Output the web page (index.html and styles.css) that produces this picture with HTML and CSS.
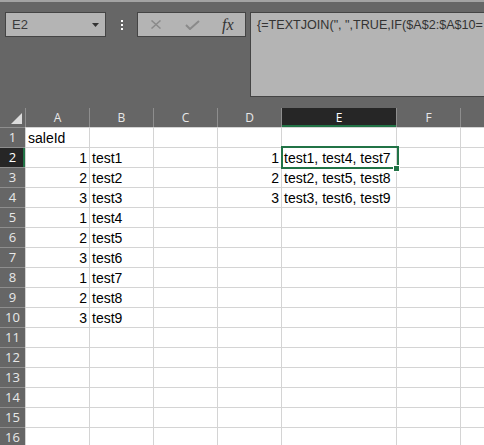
FILE: index.html
```html
<!DOCTYPE html>
<html>
<head>
<meta charset="utf-8">
<link rel="stylesheet" href="styles.css">
</head>
<body>
<div class="strip"></div>
<div class="toolbar">
  <div class="namebox"><span>E2</span><svg width="7" height="4" viewBox="0 0 7 4"><polygon points="0,0 7,0 3.5,4" fill="#333"/></svg></div>
  <div class="grip"><svg width="31" height="25" viewBox="0 0 31 25"><rect x="15" y="8" width="2" height="2" fill="#fff"/><rect x="15" y="12" width="2" height="2" fill="#fff"/><rect x="15" y="16" width="2" height="2" fill="#fff"/></svg></div>
  <div class="fbuttons">
    <svg class="ic-x" width="12" height="9" viewBox="0 0 12 9"><path d="M1.5 0.5 L10.5 8.5 M10.5 0.5 L1.5 8.5" stroke="#8a8a8a" stroke-width="1.5" fill="none"/></svg>
    <svg class="ic-ok" width="15" height="10" viewBox="0 0 15 10"><path d="M1 5 L5 9 L14 1" stroke="#8a8a8a" stroke-width="2" fill="none"/></svg>
    <span class="fx">fx</span>
  </div>
  <div class="formula">{=TEXTJOIN(", ",TRUE,IF($A$2:$A$10=</div>
</div>
<div class="sheet">
  <div class="corner"><svg width="25" height="19" viewBox="0 0 25 19"><polygon points="11,16 22,16 22,5" fill="#dcdcdc"/></svg></div>
  <div class="ch">A</div><div class="ch">B</div><div class="ch">C</div><div class="ch">D</div><div class="ch sel">E</div><div class="ch">F</div><div class="ch"></div>

  <div class="rh">1</div><div class="c">saleId</div><div class="c"></div><div class="c"></div><div class="c"></div><div class="c"></div><div class="c"></div><div class="c"></div>
  <div class="rh sel">2</div><div class="c n">1</div><div class="c">test1</div><div class="c"></div><div class="c n">1</div><div class="c active">test1, test4, test7<span class="handle"></span></div><div class="c"></div><div class="c"></div>
  <div class="rh">3</div><div class="c n">2</div><div class="c">test2</div><div class="c"></div><div class="c n">2</div><div class="c">test2, test5, test8</div><div class="c"></div><div class="c"></div>
  <div class="rh">4</div><div class="c n">3</div><div class="c">test3</div><div class="c"></div><div class="c n">3</div><div class="c">test3, test6, test9</div><div class="c"></div><div class="c"></div>
  <div class="rh">5</div><div class="c n">1</div><div class="c">test4</div><div class="c"></div><div class="c"></div><div class="c"></div><div class="c"></div><div class="c"></div>
  <div class="rh">6</div><div class="c n">2</div><div class="c">test5</div><div class="c"></div><div class="c"></div><div class="c"></div><div class="c"></div><div class="c"></div>
  <div class="rh">7</div><div class="c n">3</div><div class="c">test6</div><div class="c"></div><div class="c"></div><div class="c"></div><div class="c"></div><div class="c"></div>
  <div class="rh">8</div><div class="c n">1</div><div class="c">test7</div><div class="c"></div><div class="c"></div><div class="c"></div><div class="c"></div><div class="c"></div>
  <div class="rh">9</div><div class="c n">2</div><div class="c">test8</div><div class="c"></div><div class="c"></div><div class="c"></div><div class="c"></div><div class="c"></div>
  <div class="rh">10</div><div class="c n">3</div><div class="c">test9</div><div class="c"></div><div class="c"></div><div class="c"></div><div class="c"></div><div class="c"></div>
  <div class="rh">11</div><div class="c"></div><div class="c"></div><div class="c"></div><div class="c"></div><div class="c"></div><div class="c"></div><div class="c"></div>
  <div class="rh">12</div><div class="c"></div><div class="c"></div><div class="c"></div><div class="c"></div><div class="c"></div><div class="c"></div><div class="c"></div>
  <div class="rh">13</div><div class="c"></div><div class="c"></div><div class="c"></div><div class="c"></div><div class="c"></div><div class="c"></div><div class="c"></div>
  <div class="rh">14</div><div class="c"></div><div class="c"></div><div class="c"></div><div class="c"></div><div class="c"></div><div class="c"></div><div class="c"></div>
  <div class="rh">15</div><div class="c"></div><div class="c"></div><div class="c"></div><div class="c"></div><div class="c"></div><div class="c"></div><div class="c"></div>
  <div class="rh">16</div><div class="c"></div><div class="c"></div><div class="c"></div><div class="c"></div><div class="c"></div><div class="c"></div><div class="c"></div>
</div>
</body>
</html>
```
FILE: styles.css
```css
html, body {
  margin: 0;
  padding: 0;
  overflow: hidden;
}
body {
  width: 484px;
  height: 445px;
  background: #666666;
  font-family: "Liberation Sans", Arial, sans-serif;
}
.strip {
  height: 2px;
  background: #a3a3a3;
}
.toolbar {
  display: flex;
  align-items: flex-start;
  height: 106px;
  box-sizing: border-box;
  padding: 10px 0 0 5px;
}
.namebox {
  width: 101px;
  height: 25px;
  flex: none;
  box-sizing: border-box;
  background: #b4b4b4;
  border: 1px solid #444;
  display: flex;
  align-items: center;
  justify-content: space-between;
  padding: 0 6px 0 6px;
  font-size: 13px;
  color: #3b3b3b;
}
.grip {
  width: 31px;
  height: 25px;
  flex: none;
}
.grip svg { display: block; }
.fbuttons {
  width: 109px;
  height: 25px;
  flex: none;
  box-sizing: border-box;
  background: #b4b4b4;
  border: 1px solid #444;
  display: flex;
  align-items: center;
  padding-left: 12px;
}
.ic-ok { margin-left: 23px; }
.fx {
  margin-left: 22px;
  font-family: "Liberation Serif", serif;
  font-style: italic;
  font-size: 16px;
  color: #333;
}
.formula {
  flex: 1;
  min-width: 0;
  margin-left: 4px;
  height: 85px;
  box-sizing: border-box;
  background: #b4b4b4;
  border: 1px solid #444;
  border-right: none;
  padding: 5px 0 0 6px;
  font-size: 12.6px;
  color: #333;
  white-space: nowrap;
  overflow: hidden;
}
.sheet {
  display: grid;
  grid-template-columns: 25px 64px 64px 64px 64px 115px 64px minmax(0, 1fr);
  grid-template-rows: 19px repeat(16, 20px);
}
.corner svg { display: block; }
.ch {
  background: #666;
  color: #e8e8e8;
  font-family: "Open Sans", sans-serif;
  font-size: 12px;
  line-height: 19px;
  text-align: center;
  border-left: 1px solid #8e8e8e;
  box-sizing: border-box;
}
.ch.sel {
  background: #262626;
  color: #fff;
  box-shadow: inset 0 -2px 0 #217346;
}
.rh {
  background: #666;
  color: #e8e8e8;
  font-family: "Open Sans", sans-serif;
  font-size: 13px;
  line-height: 19px;
  text-align: center;
  border-top: 1px solid #8e8e8e;
  box-sizing: border-box;
}
.rh.sel {
  background: #262626;
  color: #fff;
  box-shadow: inset -2px 0 0 #217346;
}
.c {
  background: #fff;
  border-left: 1px solid #d4d4d4;
  border-top: 1px solid #d4d4d4;
  box-sizing: border-box;
  font-size: 14px;
  line-height: 18px;
  padding: 1px 2px 0 2px;
  white-space: nowrap;
  color: #000;
}
.n { text-align: right; }
.active {
  position: relative;
}
.active::after {
  content: "";
  position: absolute;
  left: -1px;
  top: -2px;
  width: 118px;
  height: 23px;
  box-sizing: border-box;
  border: 2px solid #217346;
  z-index: 2;
}
.handle {
  position: absolute;
  left: 111px;
  top: 17px;
  width: 7px;
  height: 7px;
  box-sizing: border-box;
  background: #217346;
  border: 1px solid #fff;
  z-index: 3;
}
```
